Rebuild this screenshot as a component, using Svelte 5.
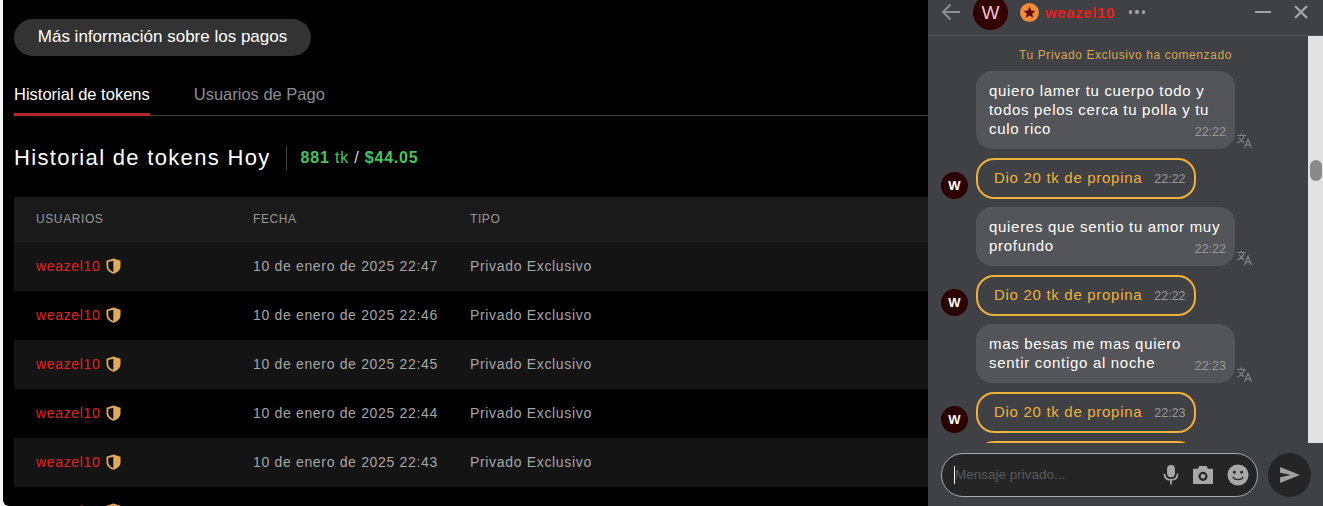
<script>
  const rows = [
    { date: '10 de enero de 2025 22:47', type: 'Privado Exclusivo' },
    { date: '10 de enero de 2025 22:46', type: 'Privado Exclusivo' },
    { date: '10 de enero de 2025 22:45', type: 'Privado Exclusivo' },
    { date: '10 de enero de 2025 22:44', type: 'Privado Exclusivo' },
    { date: '10 de enero de 2025 22:43', type: 'Privado Exclusivo' },
    { date: '', type: '' }
  ];

  const messages = [
    { text: 'quiero lamer tu cuerpo todo y todos pelos cerca tu polla y tu culo rico', time: '22:22' },
    { gift: true, time: '22:22' },
    { text: 'quieres que sentio tu amor muy profundo', time: '22:22' },
    { gift: true, time: '22:22' },
    { text: 'mas besas me mas quiero sentir contigo al noche', time: '22:23' },
    { gift: true, time: '22:23' },
    { gift: true, time: '22:23' }
  ];
</script>

<div class="page">
  <main class="earnings">
    <button class="info-btn">Más información sobre los pagos</button>

    <div class="tabs">
      <span class="tab active">Historial de tokens</span>
      <span class="tab">Usuarios de Pago</span>
    </div>

    <div class="title-row">
      <h1>Historial de tokens Hoy</h1>
      <span class="divider"></span>
      <span class="totals"><b>881</b> tk <i>/</i> <b>$44.05</b></span>
    </div>

    <div class="table">
      <div class="row head">
        <span>USUARIOS</span>
        <span>FECHA</span>
        <span>TIPO</span>
      </div>
      {#each rows as row}
        <div class="row">
          <span class="user">
            weazel10
            <svg class="shield" viewBox="0 0 16 17" width="15" height="16">
              <path d="M8 .5 L15.5 2.8 V8.5 C15.5 12.5 12.5 15.5 8 16.8 C3.5 15.5 .5 12.5 .5 8.5 V2.8 Z" fill="#e0a95c" />
              <path d="M7.8 2.8 L2.4 4.3 V8.5 C2.4 11.4 4.6 13.8 7.8 14.8 Z" fill="#111" />
            </svg>
          </span>
          <span>{row.date}</span>
          <span>{row.type}</span>
        </div>
      {/each}
    </div>
  </main>

  <aside class="chat">
    <header class="chat-head">
      <svg class="back" viewBox="0 0 20 18" width="20" height="18">
        <path d="M19 9 H2 M9.5 1.5 L2 9 L9.5 16.5" fill="none" stroke="#8f8f8f" stroke-width="2" />
      </svg>
      <span class="head-avatar">W</span>
      <span class="badge">
        <svg viewBox="0 0 20 20" width="13" height="13">
          <path d="M10 1 L12.7 7 L19 7.6 L14.2 11.8 L15.7 18.2 L10 14.8 L4.3 18.2 L5.8 11.8 L1 7.6 L7.3 7 Z" fill="#5c0a0a" />
        </svg>
      </span>
      <span class="head-name">weazel10</span>
      <span class="dots"><i></i><i></i><i></i></span>
      <span class="spacer"></span>
      <span class="minimize"></span>
      <svg class="close" viewBox="0 0 14 14" width="14" height="14">
        <path d="M1 1 L13 13 M13 1 L1 13" stroke="#a3a3a3" stroke-width="2.4" />
      </svg>
    </header>

    <div class="chat-body">
      <div class="messages">
        <p class="system">Tu Privado Exclusivo ha comenzado</p>
        {#each messages as msg}
          {#if msg.gift}
            <div class="msg gift-msg">
              <span class="avatar">W</span>
              <div class="gift">
                <span>Dio 20 tk de propina</span>
                <time>{msg.time}</time>
              </div>
            </div>
          {:else}
            <div class="msg text-msg">
              <div class="bubble">
                {msg.text}
                <time>{msg.time}</time>
              </div>
              <svg class="translate" viewBox="0 0 24 24" width="17" height="17">
                <path d="M1.5 5 H14 M7.5 2 V5 M11.5 5 C10.5 9.5 6.5 13.5 2 15.5 M4.5 8 C6 11 8.5 13.5 11.5 15 M12 22.5 L17 10.5 L22 22.5 M13.8 18.5 H20.2" fill="none" stroke="#858585" stroke-width="1.6" />
              </svg>
            </div>
          {/if}
        {/each}
      </div>
      <div class="scrollbar"><span class="thumb"></span></div>
    </div>

    <footer class="composer">
      <div class="input">
        <span class="caret"></span>
        <span class="placeholder">Mensaje privado...</span>
        <svg viewBox="0 0 18 24" width="16" height="21">
          <rect x="4.5" y="1" width="9" height="14" rx="4.5" fill="#a8a8a8" />
          <path d="M1.5 11 C1.5 16 5 18 9 18 C13 18 16.5 16 16.5 11 M9 18 V23.5" fill="none" stroke="#a8a8a8" stroke-width="2" />
        </svg>
        <svg viewBox="0 0 24 22" width="22" height="20">
          <path fill-rule="evenodd" fill="#a8a8a8" d="M8 1 H16 L17.5 4 H22 Q23 4 23 5 V20 Q23 21 22 21 H2 Q1 21 1 20 V5 Q1 4 2 4 H6.5 Z M12 7.5 A5 5 0 1 0 12 17.5 A5 5 0 1 0 12 7.5 Z M12 9.8 A2.7 2.7 0 1 1 12 15.2 A2.7 2.7 0 1 1 12 9.8 Z" />
        </svg>
        <svg viewBox="0 0 24 24" width="22" height="22">
          <circle cx="12" cy="12" r="11.5" fill="#a8a8a8" />
          <circle cx="8" cy="9" r="1.6" fill="#2a2a2a" />
          <circle cx="16" cy="9" r="1.6" fill="#2a2a2a" />
          <path d="M6.5 14 C8 18 16 18 17.5 14" fill="none" stroke="#2a2a2a" stroke-width="1.5" />
        </svg>
      </div>
      <button class="send" aria-label="Enviar">
        <svg viewBox="0 0 24 20" width="22" height="18">
          <path d="M1 1 L23 10 L1 19 L1 12.5 L13 10 L1 7.5 Z" fill="#a0a0a0" />
        </svg>
      </button>
    </footer>
  </aside>
</div>

<style>
  :global(body) {
    background: #f4f4f4;
  }

  .page {
    display: flex;
    height: 506px;
    overflow: hidden;
    padding-left: 3px;
    font-family: "Liberation Sans", Arial, sans-serif;
  }

  .earnings {
    flex: 1;
    min-width: 0;
    background: #000;
    border-bottom-left-radius: 6px;
    padding: 19px 0 0 11px;
    overflow: hidden;
  }

  .info-btn {
    display: block;
    width: 297px;
    height: 37px;
    padding: 0 0 2px;
    border: none;
    border-radius: 19px;
    background: #333;
    color: #fff;
    font: 17px "Liberation Sans", Arial, sans-serif;
  }

  .tabs {
    display: flex;
    gap: 44px;
    margin-top: 19px;
    border-bottom: 1px solid #3a3a3a;
    height: 40px;
  }

  .tab {
    height: 41px;
    box-sizing: border-box;
    padding-top: 10px;
    font-size: 16.5px;
    color: #8e8e8e;
  }

  .tab.active {
    color: #fff;
    border-bottom: 3px solid #b3262e;
  }

  .title-row {
    display: flex;
    align-items: center;
    margin-top: 29px;
    height: 26px;
  }

  h1 {
    margin: 0;
    font-size: 22px;
    font-weight: 400;
    letter-spacing: 1.32px;
    color: #fff;
  }

  .divider {
    width: 1px;
    height: 23px;
    margin: 0 14px 0 15px;
    background: #444;
  }

  .totals {
    font-size: 16px;
    letter-spacing: 0.8px;
    color: #47c45d;
  }

  .totals b {
    font-weight: 700;
  }

  .totals i {
    font-style: normal;
    color: #ddd;
  }

  .table {
    margin-top: 26px;
  }

  .row {
    display: grid;
    grid-template-columns: 217px 217px 1fr;
    align-items: center;
    box-sizing: border-box;
    height: 49px;
    padding: 0 0 2px 22px;
    font-size: 14px;
    letter-spacing: 0.67px;
    color: #a6a6a6;
  }

  .row:nth-child(even) {
    background: #141414;
  }

  .row.head {
    height: 45px;
    background: #1a1a1a;
    font-size: 12px;
    letter-spacing: 0.6px;
    color: #999;
  }

  .user {
    display: flex;
    align-items: center;
    gap: 5px;
    color: #e62222;
  }

  .chat {
    flex: 0 0 395px;
    display: flex;
    flex-direction: column;
    overflow: hidden;
    background: #404144;
  }

  .chat-head {
    display: flex;
    align-items: center;
    flex: 0 0 36px;
    box-sizing: border-box;
    height: 36px;
    padding: 0 15px 11px 13px;
    border-bottom: 1px solid #555;
  }

  .head-avatar {
    flex: 0 0 35px;
    height: 35px;
    margin-left: 12px;
    border-radius: 50%;
    background: #330000;
    color: #f2c4c4;
    font-size: 19px;
    line-height: 35px;
    text-align: center;
  }

  .badge {
    display: grid;
    place-items: center;
    width: 19px;
    height: 19px;
    margin-left: 12px;
    border-radius: 50%;
    background: #f08a3c;
  }

  .head-name {
    margin-left: 6px;
    font-size: 15px;
    font-weight: 700;
    letter-spacing: 0.6px;
    color: #e8201c;
  }

  .dots {
    display: flex;
    gap: 3px;
    margin-left: 14px;
  }

  .dots i {
    width: 3.5px;
    height: 3.5px;
    border-radius: 50%;
    background: #a3a3a3;
  }

  .spacer {
    flex: 1;
  }

  .minimize {
    width: 16px;
    height: 2.5px;
    margin-right: 23px;
    background: #a3a3a3;
  }

  .chat-body {
    display: flex;
    flex: 0 0 407px;
    overflow: hidden;
  }

  .messages {
    flex: 1;
    min-width: 0;
    padding: 0 13px;
    overflow: hidden;
  }

  .system {
    margin: 12px 0 9px;
    padding-left: 15px;
    font-size: 12px;
    line-height: 14px;
    letter-spacing: 0.58px;
    text-align: center;
    color: #d6a654;
  }

  .msg {
    display: flex;
    margin-bottom: 8.5px;
  }

  .text-msg {
    padding-left: 35px;
    align-items: flex-end;
  }

  .bubble {
    position: relative;
    box-sizing: border-box;
    width: 259px;
    padding: 10px 13px 11px;
    border-radius: 16px;
    background: #545558;
    font-size: 15px;
    line-height: 19px;
    letter-spacing: 0.7px;
    color: #fff;
  }

  .bubble time {
    position: absolute;
    right: 9px;
    bottom: 7px;
    font-size: 12.5px;
    letter-spacing: 0;
    color: #9a9a9a;
  }

  .translate {
    margin-left: 1px;
  }

  .gift-msg {
    align-items: flex-end;
  }

  .avatar {
    flex: 0 0 27px;
    height: 27px;
    margin-right: 8px;
    border-radius: 50%;
    background: #2b0000;
    color: #fff;
    font-size: 13px;
    font-weight: 700;
    line-height: 27px;
    text-align: center;
  }

  .gift {
    display: flex;
    align-items: center;
    box-sizing: border-box;
    width: 220px;
    height: 41px;
    padding: 0 0 2px 16px;
    border: 2px solid #f0b03c;
    border-radius: 18px;
    color: #efb13f;
    font-size: 15px;
    letter-spacing: 0.7px;
  }

  .gift time {
    margin: 4px 0 0 12px;
    font-size: 12.5px;
    letter-spacing: 0;
    color: #9a9a9a;
  }

  .scrollbar {
    flex: 0 0 15px;
    background: #e2e2e2;
  }

  .thumb {
    display: block;
    width: 12px;
    height: 21px;
    margin: 124px 0 0 2px;
    border-radius: 6px;
    background: #8a8a8a;
  }

  .composer {
    display: flex;
    align-items: center;
    gap: 10px;
    flex: 1;
    padding: 0 12px 0 13px;
  }

  .input {
    display: flex;
    align-items: center;
    gap: 13px;
    flex: 0 0 317px;
    box-sizing: border-box;
    height: 44px;
    padding: 0 8px 0 12px;
    border: 1px solid #a9a9a9;
    border-radius: 22px;
    background: #252525;
  }

  .caret {
    width: 1px;
    height: 18px;
    background: #fff;
    margin-right: -13px;
  }

  .placeholder {
    flex: 1;
    font-size: 13.5px;
    color: #5a5a5a;
  }

  .send {
    display: grid;
    place-items: center;
    width: 44px;
    height: 44px;
    padding: 0;
    border: none;
    border-radius: 50%;
    background: #252525;
  }
</style>
